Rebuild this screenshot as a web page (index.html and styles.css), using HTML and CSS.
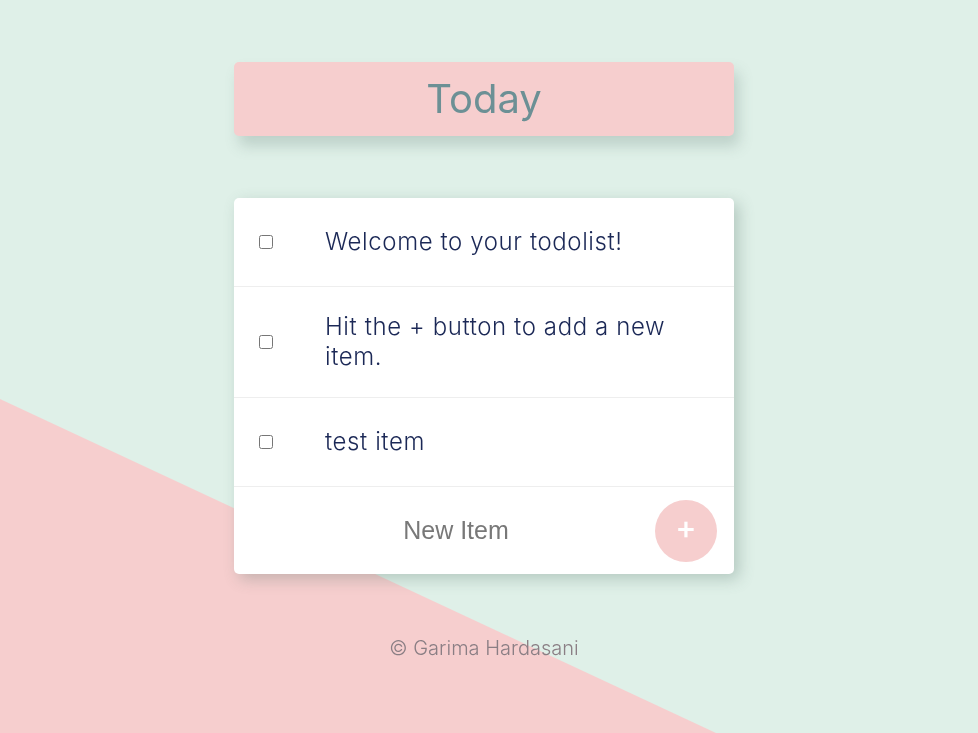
FILE: index.html
```html
<!DOCTYPE html>
<html lang="en">
<head>
<meta charset="utf-8">
<title>To-Do List</title>
<link rel="stylesheet" href="styles.css">
</head>
<body>
<div class="page">
  <div class="heading"><h1>Today</h1></div>
  <div class="box">
    <div class="item"><input type="checkbox"><p>Welcome to your todolist!</p></div>
    <div class="item"><input type="checkbox"><p>Hit the + button to add a new item.</p></div>
    <div class="item"><input type="checkbox"><p>test item</p></div>
    <form class="item new-item">
      <input class="new-input" type="text" placeholder="New Item" autocomplete="off">
      <button class="add" type="button">+</button>
    </form>
  </div>
  <footer class="footer">© Garima Hardasani</footer>
</div>
</body>
</html>
```
FILE: styles.css
```css
html, body {
  margin: 0;
  height: 100%;
}
body {
  background: #dff0e8;
  font-family: Inter, "Noto Sans", sans-serif;
  overflow: hidden;
}
body::before {
  content: "";
  position: fixed;
  inset: 0;
  background: #f6cece;
  clip-path: polygon(0 399px, 716px 733px, 0 733px);
  z-index: 0;
}
.page {
  position: relative;
  z-index: 1;
  display: flex;
  flex-direction: column;
  align-items: center;
  padding: 62px 10px 0 0;
}
.heading {
  width: 500px;
  height: 74px;
  background: #f6cece;
  border-radius: 5px;
  box-shadow: 5px 10px 14px rgba(90, 120, 110, 0.25);
  display: flex;
  align-items: center;
  justify-content: center;
}
.heading h1 {
  margin: 0;
  font-size: 40px;
  font-weight: 400;
  color: #6c9095;
  line-height: 1;
  padding-bottom: 1px;
}
.box {
  margin-top: 62px;
  width: 500px;
  background: #fff;
  border-radius: 5px;
  box-shadow: 5px 5px 15px rgba(80, 110, 100, 0.3);
}
.item {
  display: flex;
  align-items: center;
  min-height: 89px;
  box-sizing: border-box;
  padding: 25px 0;
  border-bottom: 1px solid #eeeeee;
}
.item input[type="checkbox"] {
  margin: 0 0 0 25px;
  width: 14px;
  height: 14px;
  flex: none;
}
.item p {
  margin: 0 0 0 52px;
  padding-right: 40px;
  font-size: 24px;
  font-weight: 300;
  letter-spacing: 0.6px;
  line-height: 30px;
  color: #1b2856;
}
.new-item {
  border-bottom: none;
  padding: 12px 17px 12px 0;
  min-height: 87px;
}
.new-input {
  flex: 1;
  min-width: 0;
  border: none;
  outline: none;
  background: transparent;
  font-family: "Liberation Sans", Arial, sans-serif;
  font-size: 25px;
  text-align: center;
  padding: 0 12px 0 35px;
  color: #333;
}
.new-input::placeholder {
  color: #787878;
}
.add {
  width: 62px;
  height: 62px;
  border-radius: 50%;
  border: none;
  background: #f6cece;
  color: #fff;
  font-family: Inter, "Noto Sans", sans-serif;
  font-size: 32px;
  font-weight: 500;
  line-height: 1;
  padding: 0 0 6px;
  flex: none;
}
.footer {
  margin-top: 62px;
  font-size: 20px;
  font-weight: 300;
  color: #8a7e84;
}
```
